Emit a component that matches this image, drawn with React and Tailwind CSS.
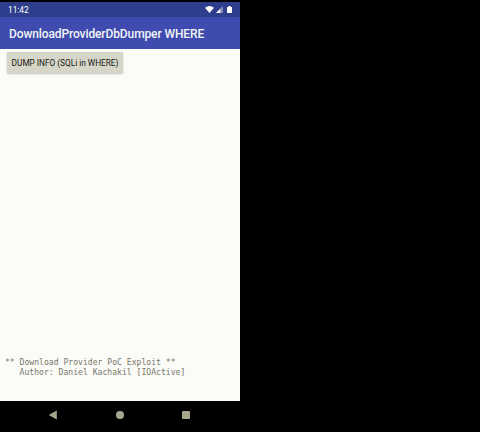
function StatusBar() {
  return (
    <div className="flex h-[15px] items-center bg-[#2e3d8c] pl-[8px] pr-[8px] text-white">
      <span className="pt-[1px] text-[8.4px] leading-[15px] tracking-[-0.05px]">11:42</span>
      <svg className="ml-auto h-[7px] w-[9px]" viewBox="0 0 9 7" fill="currentColor">
        <path d="M0 1.7Q4.5-1.5 9 1.7L4.5 7Z" />
      </svg>
      <svg className="ml-[2px] h-[7px] w-[7px]" viewBox="0 0 7 7" fill="currentColor">
        <path d="M7 0V7H0Z" opacity="0.4" />
        <path d="M4.3 2.7V7H0Z" />
      </svg>
      <svg className="ml-[4px] h-[7px] w-[5px]" viewBox="0 0 5 8" preserveAspectRatio="none" fill="currentColor">
        <path d="M1.5 0H3.5V1H5V8H0V1H1.5Z" />
      </svg>
    </div>
  );
}

function NavBar() {
  return (
    <div className="flex h-[31px] items-center bg-black pl-[48px] text-[#a8a68f]">
      <svg className="mt-[-3px] h-[10px] w-[9px]" viewBox="0 0 9 10" fill="currentColor">
        <path d="M0.7 5L8.8 0.4V9.6Z" />
      </svg>
      <div className="mt-[-3px] ml-[59px] h-[8px] w-[8px] rounded-full bg-[#a8a68f]" />
      <div className="mt-[-3px] ml-[58px] h-[8px] w-[8px] rounded-[1px] bg-[#a8a68f]" />
    </div>
  );
}

export default function App() {
  return (
    <div className="h-[432px] w-[480px] overflow-hidden bg-black pt-[2px] font-['Roboto',sans-serif]">
      <div className="flex h-[430px] w-[240px] flex-col">
        <StatusBar />
        <header className="flex h-[32px] items-center bg-[#3f4bae] pt-[1px] pl-[9px]">
          <h1 className="text-[12px] leading-[16px] font-medium tracking-[-0.11px] whitespace-nowrap text-[#f2f5f5]">
            DownloadProviderDbDumper WHERE
          </h1>
        </header>
        <main className="flex flex-1 flex-col items-start bg-[#fbfbf7] pt-[3px] pl-[7px]">
          <button className="h-[21px] w-[116px] rounded-[1px] bg-[#d6d6c8] pt-[1px] text-[8.3px] leading-[20px] tracking-[-0.02px] whitespace-nowrap text-[#181814] shadow-[0_1px_2px_rgba(0,0,0,0.22)]">
            DUMP INFO (SQLi in WHERE)
          </button>
          <pre className="mt-auto mb-[24px] ml-[-2px] font-['DejaVu_Sans_Mono',monospace] text-[8.1px] leading-[9.5px] text-[#77776c]">
            {"** Download Provider PoC Exploit **\n   Author: Daniel Kachakil [IOActive]"}
          </pre>
        </main>
        <NavBar />
      </div>
    </div>
  );
}
